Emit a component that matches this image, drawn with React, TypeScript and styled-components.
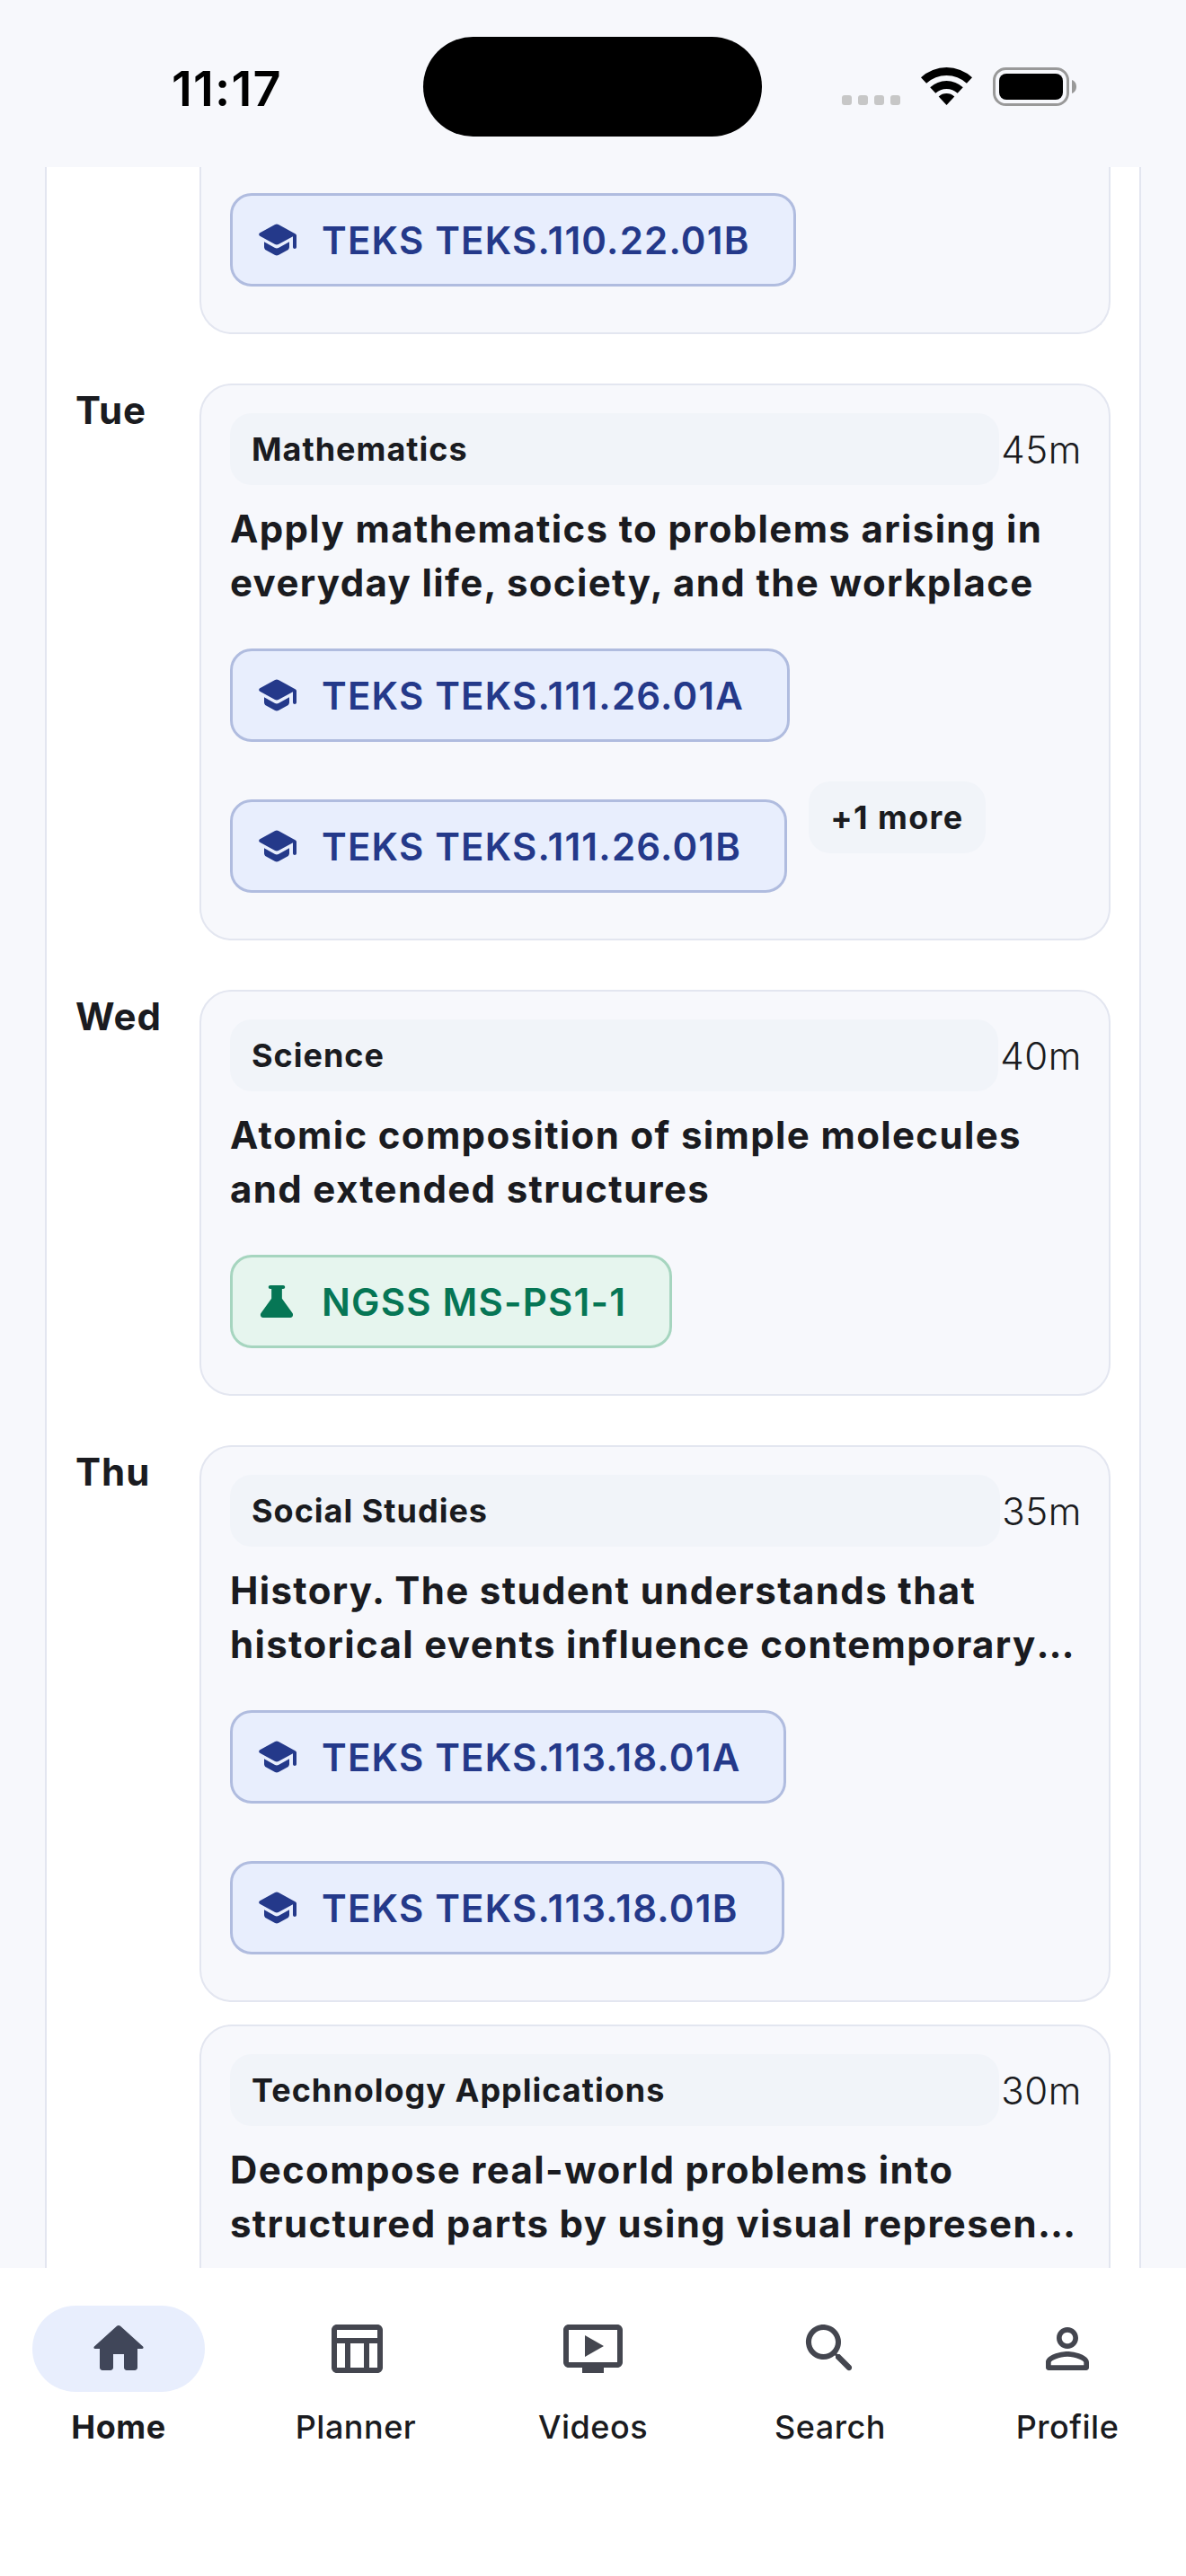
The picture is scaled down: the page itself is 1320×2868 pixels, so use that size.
import styled, { createGlobalStyle } from 'styled-components';

const GlobalStyle = createGlobalStyle`
  html, body {
    margin: 0;
    padding: 0;
    background: #f7f8fc;
  }

  * {
    box-sizing: border-box;
  }
`;

const colors = {
  ink: '#1a1b20',
  icon: '#44464f',
  page: '#f7f8fc',
  line: '#e3e6f0',
  chip: '#f1f4f9',
};

const Screen = styled.div`
  width: 1320px;
  height: 2868px;
  display: flex;
  flex-direction: column;
  overflow: hidden;
  background: ${colors.page};
  font-family: Inter, 'Noto Sans', sans-serif;
  color: ${colors.ink};
`;

const StatusBar = styled.div`
  flex: none;
  height: 186px;
  display: flex;
  align-items: flex-start;
  padding: 41px 0 0 191px;
`;

const Time = styled.div`
  width: 280px;
  margin-top: 26px;
  font-size: 54px;
  line-height: 64px;
  font-weight: 600;
  letter-spacing: 1.2px;
  color: #000;
`;

const Notch = styled.div`
  width: 377px;
  height: 111px;
  border-radius: 56px;
  background: #000;
`;

const StatusIcons = styled.div`
  display: flex;
  align-items: flex-end;
  margin: 34px 0 0 89px;
`;

const SignalDots = styled.div`
  display: flex;
  gap: 7px;
  margin-right: 23px;
  padding-bottom: 1px;
`;

const SignalDot = styled.span`
  width: 11px;
  height: 11px;
  border-radius: 3px;
  background: #c7c7c7;
`;

const WifiIcon = styled.svg`
  display: block;
  width: 57px;
  height: 42px;
  margin-right: 23px;
  margin-bottom: 1px;
`;

const BatteryIcon = styled.svg`
  display: block;
  width: 94px;
  height: 43px;
`;

const Scroller = styled.div`
  flex: 1;
  min-height: 0;
  overflow: hidden;
  padding: 0 50px;
`;

const WeekCard = styled.div`
  display: flex;
  flex-direction: column;
  gap: 55px;
  padding: 0 32px;
  background: #fff;
  border-left: 2px solid ${colors.line};
  border-right: 2px solid ${colors.line};
`;

const DayRow = styled.div`
  display: grid;
  grid-template-columns: 138px minmax(0, 1fr);
`;

const DayLabel = styled.div`
  font-size: 42px;
  line-height: 60px;
  font-weight: 700;
  letter-spacing: 1px;
`;

const DayLessons = styled.div`
  display: flex;
  flex-direction: column;
  gap: 25px;
  min-width: 0;
`;

const LessonCard = styled.div<{ $cut?: boolean }>`
  padding: ${(p) => (p.$cut ? '9px' : '31px')} 30px 31px 32px;
  background: ${colors.page};
  border: 2px solid ${colors.line};
  border-top-width: ${(p) => (p.$cut ? 0 : '2px')};
  border-radius: ${(p) => (p.$cut ? '0 0 36px 36px' : '36px')};
`;

const LessonHead = styled.div`
  display: flex;
  align-items: center;
  gap: 2px;
  margin-bottom: 19px;
`;

const SubjectChip = styled.div`
  flex: 1;
  height: 80px;
  display: flex;
  align-items: center;
  padding: 0 24px;
  border-radius: 24px;
  background: ${colors.chip};
  font-size: 36px;
  font-weight: 700;
  letter-spacing: 1px;
`;

const Duration = styled.div`
  font-size: 42px;
  font-weight: 300;
  letter-spacing: 0.6px;
  color: ${colors.ink};
`;

const LessonTitle = styled.div`
  margin-bottom: 23px;
  font-size: 42px;
  line-height: 60px;
  font-weight: 700;
  letter-spacing: 1.35px;
`;

const TitleLine = styled.div`
  white-space: nowrap;
  overflow: hidden;
  text-overflow: ellipsis;
`;

const Tags = styled.div`
  display: flex;
  flex-wrap: wrap;
  align-items: flex-start;
  column-gap: 24px;
  row-gap: 24px;
`;

const tagPalette = {
  teks: { bg: '#e8eefd', border: '#b0bcdf', text: '#24398a' },
  ngss: { bg: '#e6f5ee', border: '#a6d5bf', text: '#067655' },
};

const TagSlot = styled.div`
  height: 144px;
  display: flex;
  align-items: center;
`;

const Tag = styled.div<{ $kind: 'teks' | 'ngss' }>`
  height: 104px;
  display: flex;
  align-items: center;
  gap: 26px;
  padding: 0 48px 0 25px;
  border: 3px solid ${(p) => tagPalette[p.$kind].border};
  border-radius: 24px;
  background: ${(p) => tagPalette[p.$kind].bg};
  color: ${(p) => tagPalette[p.$kind].text};
  font-size: 42px;
  font-weight: 600;
  letter-spacing: 1.2px;
  white-space: nowrap;
`;

const TagIcon = styled.svg<{ $size: number }>`
  flex: none;
  width: ${(p) => p.$size}px;
  height: ${(p) => p.$size}px;
  margin: 0 ${(p) => (48 - p.$size) / 2}px;
  fill: currentColor;
`;

const MoreChip = styled.div`
  height: 80px;
  display: flex;
  align-items: center;
  padding: 0 24px;
  border-radius: 24px;
  background: ${colors.chip};
  font-size: 36px;
  font-weight: 700;
  letter-spacing: 1.4px;
`;

const BottomNav = styled.nav`
  flex: none;
  height: 343px;
  display: grid;
  grid-template-columns: repeat(5, 1fr);
  padding-top: 42px;
  background: #fff;
`;

const NavItem = styled.div`
  display: flex;
  flex-direction: column;
  align-items: center;
  gap: 15px;
`;

const NavIconWrap = styled.div<{ $active?: boolean }>`
  width: 192px;
  height: 96px;
  display: flex;
  align-items: center;
  justify-content: center;
  border-radius: 48px;
  background: ${(p) => (p.$active ? '#e8eefd' : 'transparent')};

  svg {
    width: 72px;
    height: 72px;
    fill: ${(p) => (p.$active ? '#404659' : colors.icon)};
  }
`;

const NavLabel = styled.div<{ $active?: boolean }>`
  font-size: 36px;
  line-height: 48px;
  font-weight: ${(p) => (p.$active ? 700 : 500)};
  letter-spacing: 0.5px;
`;

const SchoolIcon = () => (
  <TagIcon $size={48} viewBox="0 0 24 24">
    <path d="M5 13.18v2.81c0 .73.4 1.41 1.04 1.76l5 2.73c.6.33 1.32.33 1.92 0l5-2.73c.64-.35 1.04-1.03 1.04-1.76v-2.81l-6.04 3.3c-.6.33-1.32.33-1.92 0L5 13.18zm6.04-9.66l-8.43 4.6c-.69.38-.69 1.38 0 1.76l8.43 4.6c.6.33 1.32.33 1.92 0L21 10.09V16c0 .55.45 1 1 1s1-.45 1-1V9.59c0-.37-.2-.7-.52-.88l-9.52-5.19a2.04 2.04 0 0 0-1.92 0z" />
  </TagIcon>
);

const ScienceIcon = () => (
  <TagIcon $size={54} viewBox="0 0 24 24">
    <path d="M7.9 4.9c0-.5.4-.9.9-.9h6.4c.5 0 .9.4.9.9s-.4.9-.9.9h-.6v4.7l5.2 7.3c.6.9 0 2.2-1 2.2H5.2c-1 0-1.6-1.3-1-2.2l5.2-7.3V5.8h-.6c-.5 0-.9-.4-.9-.9z" />
  </TagIcon>
);

const navItems = [
  {
    label: 'Home',
    active: true,
    d: 'M10 19v-5h4v5c0 .55.45 1 1 1h3c.55 0 1-.45 1-1v-7h1.7c.46 0 .68-.57.33-.87L12.67 3.6c-.38-.34-.96-.34-1.34 0l-8.36 7.53c-.34.3-.13.87.33.87H5v7c0 .55.45 1 1 1h3c.55 0 1-.45 1-1z',
  },
  {
    label: 'Planner',
    d: 'M20 3H5C3.9 3 3 3.9 3 5v14c0 1.1.9 2 2 2h15c1.1 0 2-.9 2-2V5c0-1.1-.9-2-2-2zm0 2v3H5V5h15zm-5 14h-5v-9h5v9zM5 10h3v9H5v-9zm12 9v-9h3v9h-3z',
  },
  {
    label: 'Videos',
    d: 'M21 3H3c-1.11 0-2 .89-2 2v12c0 1.1.89 2 2 2h5v2h8v-2h5c1.1 0 2-.9 2-2V5c0-1.11-.9-2-2-2zm0 14H3V5h18v12zM16 11l-7 4V7z',
  },
  {
    label: 'Search',
    d: 'M15.5 14h-.79l-.28-.27c1.2-1.4 1.82-3.31 1.48-5.34-.47-2.78-2.79-5-5.59-5.34-4.23-.52-7.79 3.04-7.27 7.27.34 2.8 2.56 5.12 5.34 5.59 2.03.34 3.94-.28 5.34-1.48l.27.28v.79l4.25 4.25c.41.41 1.08.41 1.49 0 .41-.41.41-1.08 0-1.49L15.5 14zm-6 0C7.01 14 5 11.99 5 9.5S7.01 5 9.5 5 14 7.01 14 9.5 11.99 14 9.5 14z',
  },
  {
    label: 'Profile',
    d: 'M12 5.9c1.16 0 2.1.94 2.1 2.1s-.94 2.1-2.1 2.1S9.9 9.16 9.9 8s.94-2.1 2.1-2.1m0 9c2.97 0 6.1 1.46 6.1 2.1v1.1H5.9V17c0-.64 3.13-2.1 6.1-2.1M12 4C9.79 4 8 5.79 8 8s1.79 4 4 4 4-1.79 4-4-1.79-4-4-4zm0 9c-2.67 0-8 1.34-8 4v2c0 .55.45 1 1 1h14c.55 0 1-.45 1-1v-2c0-2.66-5.33-4-8-4z',
  },
];

interface Lesson {
  subject?: string;
  minutes?: number;
  title?: string[];
  tags: { kind: 'teks' | 'ngss'; code: string }[];
  more?: string;
  cut?: boolean;
}

const week: { day?: string; lessons: Lesson[] }[] = [
  {
    lessons: [{ cut: true, tags: [{ kind: 'teks', code: 'TEKS TEKS.110.22.01B' }] }],
  },
  {
    day: 'Tue',
    lessons: [
      {
        subject: 'Mathematics',
        minutes: 45,
        title: ['Apply mathematics to problems arising in', 'everyday life, society, and the workplace'],
        tags: [
          { kind: 'teks', code: 'TEKS TEKS.111.26.01A' },
          { kind: 'teks', code: 'TEKS TEKS.111.26.01B' },
        ],
        more: '+1 more',
      },
    ],
  },
  {
    day: 'Wed',
    lessons: [
      {
        subject: 'Science',
        minutes: 40,
        title: ['Atomic composition of simple molecules', 'and extended structures'],
        tags: [{ kind: 'ngss', code: 'NGSS MS-PS1-1' }],
      },
    ],
  },
  {
    day: 'Thu',
    lessons: [
      {
        subject: 'Social Studies',
        minutes: 35,
        title: ['History. The student understands that', 'historical events influence contemporary society and culture'],
        tags: [
          { kind: 'teks', code: 'TEKS TEKS.113.18.01A' },
          { kind: 'teks', code: 'TEKS TEKS.113.18.01B' },
        ],
      },
      {
        subject: 'Technology Applications',
        minutes: 30,
        title: ['Decompose real-world problems into', 'structured parts by using visual representations'],
        tags: [],
      },
    ],
  },
];

export default function App() {
  return (
    <>
      <GlobalStyle />
      <Screen>
        <StatusBar>
          <Time>11:17</Time>
          <Notch />
          <StatusIcons>
            <SignalDots>
              <SignalDot />
              <SignalDot />
              <SignalDot />
              <SignalDot />
            </SignalDots>
            <WifiIcon viewBox="0 0 57 42">
              <path d="M0 11.15A42 42 0 0 1 57 11.15L50.9 17.8A33 33 0 0 0 6.1 17.8Z" />
              <path d="M10.2 22.2A27 27 0 0 1 46.8 22.2L40.7 28.8A18 18 0 0 0 16.3 28.8Z" />
              <path d="M19.7 32.4A13 13 0 0 1 37.3 32.4L28.5 42Z" />
            </WifiIcon>
            <BatteryIcon viewBox="0 0 94 43">
              <rect x="1.5" y="1.5" width="82" height="40" rx="13" fill="none" stroke="#999" strokeWidth="3" />
              <rect x="7" y="7" width="71" height="29" rx="8" fill="#000" />
              <path d="M88 14c3 1 5 4 5 7.5s-2 6.500-5 7.500z" fill="#999" />
            </BatteryIcon>
          </StatusIcons>
        </StatusBar>

        <Scroller>
          <WeekCard>
            {week.map((row, i) => (
              <DayRow key={i}>
                <DayLabel>{row.day}</DayLabel>
                <DayLessons>
                  {row.lessons.map((lesson, j) => (
                    <LessonCard key={j} $cut={lesson.cut}>
                      {lesson.subject && (
                        <>
                          <LessonHead>
                            <SubjectChip>{lesson.subject}</SubjectChip>
                            <Duration>{lesson.minutes}m</Duration>
                          </LessonHead>
                          <LessonTitle>
                            {lesson.title?.map((line) => (
                              <TitleLine key={line}>{line}</TitleLine>
                            ))}
                          </LessonTitle>
                        </>
                      )}
                      {lesson.tags.length > 0 && (
                        <Tags>
                          {lesson.tags.map((tag) => (
                            <TagSlot key={tag.code}>
                              <Tag $kind={tag.kind}>
                                {tag.kind === 'teks' ? <SchoolIcon /> : <ScienceIcon />}
                                {tag.code}
                              </Tag>
                            </TagSlot>
                          ))}
                          {lesson.more && <MoreChip>{lesson.more}</MoreChip>}
                        </Tags>
                      )}
                    </LessonCard>
                  ))}
                </DayLessons>
              </DayRow>
            ))}
          </WeekCard>
        </Scroller>

        <BottomNav>
          {navItems.map((item) => (
            <NavItem key={item.label}>
              <NavIconWrap $active={item.active}>
                <svg viewBox="0 0 24 24">
                  <path d={item.d} />
                </svg>
              </NavIconWrap>
              <NavLabel $active={item.active}>{item.label}</NavLabel>
            </NavItem>
          ))}
        </BottomNav>
      </Screen>
    </>
  );
}
